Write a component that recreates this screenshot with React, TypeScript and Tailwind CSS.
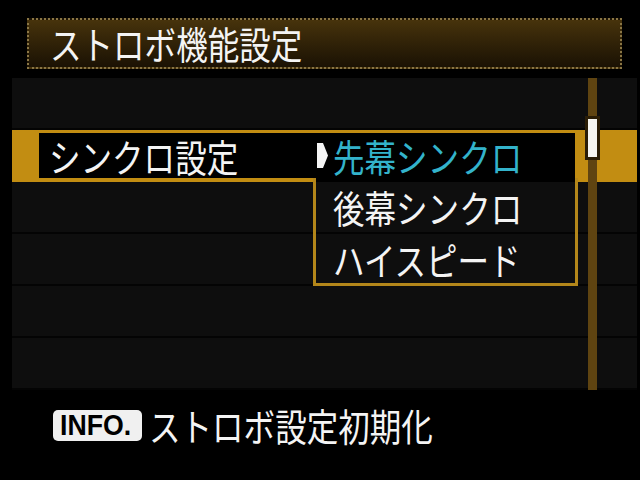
import React from 'react';

const jp = { fontFamily: '"Noto Sans CJK JP", "Noto Sans", sans-serif' };

function Label({ text, className = '' }: { text: string; className?: string }) {
  return (
    <span className={`inline-block origin-left scale-x-[0.83] whitespace-nowrap text-[38px] leading-none ${className}`}>
      {text}
    </span>
  );
}

function Row() {
  return <div className="h-[52px] border-b-2 border-[#040404] bg-[#0e0e0e]" />;
}

export default function App() {
  return (
    <div className="flex h-[480px] w-[640px] flex-col overflow-hidden bg-black text-[#f4f4f4]" style={jp}>
      {/* title */}
      <div className="pl-[27px] pt-[18px]">
        <div className="flex h-[51px] w-[595px] items-center border-2 border-dotted border-[#8a7645] bg-linear-to-b from-[#47330c] to-[#1b1204] pl-[21px]">
          <Label text="ストロボ機能設定" className="-mt-[2px]" />
        </div>
      </div>

      {/* list */}
      <div className="relative ml-[12px] mt-[9px] w-[625px]">
        <Row />
        <div className="flex h-[52px] bg-[#c28d12] pb-[4px] pl-[27px] pt-[3px]">
          <div className="flex w-[536px] items-center bg-black">
            <div className="flex w-[277px] items-center pl-[10px]">
              <Label text="シンクロ設定" />
            </div>
            <svg width="11" height="25" viewBox="0 0 11 25" className="ml-[1px]">
              <polygon points="0,0 6,0 11,12.5 6,25 0,25" fill="#f4f4f4" />
            </svg>
            <div className="ml-[5px] flex items-center">
              <Label text="先幕シンクロ" className="text-[#33b3cb]" />
            </div>
          </div>
        </div>
        <Row />
        <Row />
        <Row />
        <Row />

        {/* dropdown below the selected row */}
        <div className="absolute left-[301px] top-[100px] flex h-[108px] w-[265px] flex-col border-x-[3px] border-b-[3px] border-[#b3861a]">
          <div className="h-[4px] bg-black" />
          <div className="flex h-[52px] items-center border-b-2 border-[#040404] bg-[#0e0e0e] pl-[17px]">
            <Label text="後幕シンクロ" />
          </div>
          <div className="flex flex-1 items-center bg-[#0e0e0e] pl-[17px]">
            <Label text="ハイスピード" />
          </div>
        </div>

        {/* scrollbar */}
        <div className="absolute left-[576px] top-0 h-[312px] w-[9px] bg-[#5f4411]" />
        <div className="absolute left-[573px] top-[38px] h-[44px] w-[15px] bg-[#2a1d06] p-[3px]">
          <div className="h-full w-full bg-[#f6f6f2]" />
        </div>
      </div>

      {/* footer */}
      <div className="mt-[15px] flex h-[40px] items-center pl-[53px]">
        <div
          className="flex h-[31px] w-[89px] items-center rounded-[5px] bg-[#f0f0f0] pl-[7px] pt-[1px] text-black"
          style={{ fontFamily: '"Liberation Sans", Arial, sans-serif' }}
        >
          <span className="inline-block origin-left scale-x-[0.92] text-[29px] font-bold leading-none">
            INFO.
          </span>
        </div>
        <div className="ml-[7px] flex items-center">
          <Label text="ストロボ設定初期化" />
        </div>
      </div>
    </div>
  );
}
